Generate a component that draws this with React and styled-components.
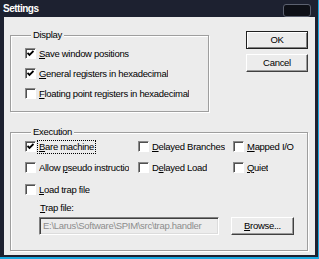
import React from 'react';
import styled, { createGlobalStyle } from 'styled-components';

const GlobalStyle = createGlobalStyle`
  html, body {
    margin: 0;
    padding: 0;
    background: #19a8e0;
  }
  body {
    font-family: "Liberation Sans", Arial, sans-serif;
    font-size: 9.5px;
    letter-spacing: -0.3px;
    color: #000;
  }
`;

const Window = styled.div`
  width: 318px;
  height: 257px;
  background: #1d2130;
  display: flex;
  flex-direction: column;
  box-sizing: border-box;
`;

const TitleBar = styled.div`
  height: 17px;
  flex: none;
  display: flex;
  align-items: center;
  justify-content: space-between;
  padding: 0 7px 0 3px;
  box-sizing: border-box;
`;

const Title = styled.span`
  color: #fff;
  font-weight: bold;
  font-size: 10px;
  letter-spacing: -0.5px;
  line-height: 17px;
`;

const CloseButton = styled.div`
  width: 26px;
  height: 11px;
  margin-top: 4px;
  border: 1px solid #5c6170;
  border-radius: 3px;
  background: #0e1017;
`;

const Client = styled.div`
  flex: 1;
  margin: 0 3px 2px 4px;
  background: #ececec;
  padding: 12px 7px 0 6px;
  box-sizing: border-box;
  display: grid;
  grid-template-columns: 199px 1fr;
  grid-template-rows: auto auto;
  row-gap: 10px;
  align-items: start;
`;

const Group = styled.fieldset`
  margin: 0;
  padding: ${p => p.$pad};
  border: 1px solid #9e9e9e;
  box-shadow: 1px 1px 0 #fff, inset 1px 1px 0 #fff;
  min-width: 0;
  grid-column: ${p => p.$span ? '1 / 3' : 'auto'};
`;

const Legend = styled.legend`
  margin-left: 6px;
  padding: 0 2px;
  line-height: 12px;
  background: #ececec;
`;

const Stack = styled.div`
  display: flex;
  flex-direction: column;
  gap: 7px;
`;

const ButtonColumn = styled.div`
  justify-self: end;
  margin-top: 2px;
  display: flex;
  flex-direction: column;
  gap: 5px;
`;

const Button = styled.div`
  width: ${p => p.$w || 62}px;
  height: 18px;
  box-sizing: border-box;
  display: flex;
  align-items: center;
  justify-content: center;
  background: #ececec;
  border: 1px solid;
  border-color: ${p => p.$default ? '#202020' : '#fff #404040 #404040 #fff'};
  box-shadow: ${p => p.$default
    ? 'inset 1px 1px 0 #fff, inset -1px -1px 0 #808080'
    : 'inset -1px -1px 0 #9a9a9a'};
  line-height: 12px;
`;

const Row = styled.div`
  display: flex;
  align-items: center;
  height: 13px;
  margin-top: ${p => p.$mt || 0}px;
`;

const Box = styled.span`
  width: 11px;
  height: 11px;
  flex: none;
  box-sizing: border-box;
  margin-right: 3px;
  background: #fff;
  border: 1px solid;
  border-color: #8a8a8a #fff #fff #8a8a8a;
  box-shadow: inset 1px 1px 0 #505050;
  display: flex;
  align-items: center;
  justify-content: center;
`;

const Label = styled.span`
  line-height: 12px;
  white-space: nowrap;
  overflow: hidden;
  max-width: ${p => p.$max ? p.$max + 'px' : 'none'};
  outline: ${p => p.$focus ? '1px dotted #000' : 'none'};
  outline-offset: 0;
  padding: 0 ${p => p.$focus ? 1 : 0}px;
  margin-left: ${p => p.$focus ? -1 : 0}px;
`;

const ExecGrid = styled.div`
  display: grid;
  grid-template-columns: 113px 95px 1fr;
  row-gap: 8px;
`;

const TrapLabel = styled.div`
  margin: 6px 0 0 15px;
  line-height: 12px;
`;

const FieldRow = styled.div`
  display: flex;
  align-items: center;
  gap: 12px;
  margin: 3px 0 0 14px;
`;

const TextField = styled.div`
  width: 180px;
  height: 18px;
  box-sizing: border-box;
  border: 1px solid;
  border-color: #808080 #fff #fff #808080;
  box-shadow: inset 1px 1px 0 #404040, inset -1px -1px 0 #dcdcdc;
  padding: 0 3px;
  color: #8c8c8c;
  line-height: 16px;
  white-space: nowrap;
  overflow: hidden;
`;

const Check = ({ on }) => (
  <Box>
    {on && (
      <svg width="7" height="7" viewBox="0 0 7 7">
        <path d="M0.5 3 L2.5 5 L6.5 1" fill="none" stroke="#000" strokeWidth="1.8" />
      </svg>
    )}
  </Box>
);

const Option = ({ on, mt, children, max, focus }) => (
  <Row $mt={mt}>
    <Check on={on} />
    <Label $max={max} $focus={focus}>{children}</Label>
  </Row>
);

export default function App() {
  return (
    <>
      <GlobalStyle />
      <Window>
        <TitleBar>
          <Title>Settings</Title>
          <CloseButton />
        </TitleBar>
        <Client>
          <Group $pad="6px 0 11px 14px">
            <Legend>Display</Legend>
            <Stack>
              <Option on><u>S</u>ave window positions</Option>
              <Option on><u>G</u>eneral registers in hexadecimal</Option>
              <Option><u>F</u>loating point registers in hexadecimal</Option>
            </Stack>
          </Group>
          <ButtonColumn>
            <Button $default>OK</Button>
            <Button>Cancel</Button>
          </ButtonColumn>
          <Group $span $pad="2px 0 15px 14px">
            <Legend>Execution</Legend>
            <ExecGrid>
              <Option on focus><u>B</u>are machine</Option>
              <Option><u>D</u>elayed Branches</Option>
              <Option><u>M</u>apped I/O</Option>
              <Option max={90}>Allow <u>p</u>seudo instructions</Option>
              <Option>D<u>e</u>layed Load</Option>
              <Option><u>Q</u>uiet</Option>
            </ExecGrid>
            <Option mt={9}><u>L</u>oad trap file</Option>
            <TrapLabel><u>T</u>rap file:</TrapLabel>
            <FieldRow>
              <TextField>E:\Larus\Software\SPIM\src\trap.handler</TextField>
              <Button $w={63}><span><u>B</u>rowse...</span></Button>
            </FieldRow>
          </Group>
        </Client>
      </Window>
    </>
  );
}
